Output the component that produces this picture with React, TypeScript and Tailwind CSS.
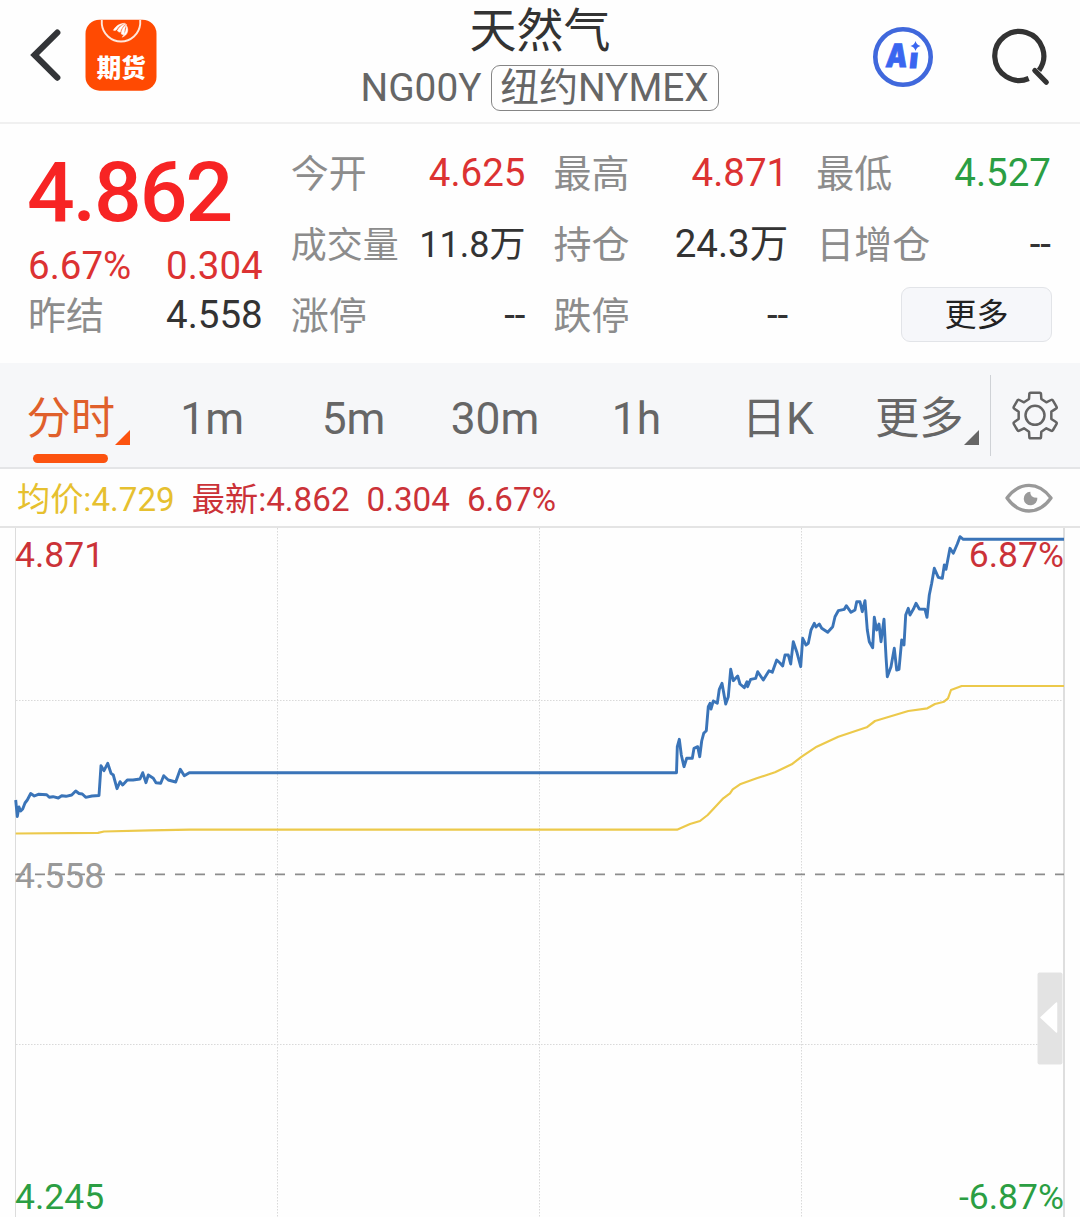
import React from "react";

const BLUE_LINE =
  "15.7,800 17.3,816.5 19,807 20.7,811 22.7,809 25,803 27.3,800 30.7,793.5 34.3,796 38.3,794.3 46.7,794.7 49.3,797.3 53,796.7 58.3,798 61.7,795.7 66,796.3 71.7,795 75.7,791 79,793.5 82.3,794 85.7,797.3 92,796 99,795.5 101,765.7 104,770.7 107.7,763.3 111,773.3 113.3,775 117,788.7 120,781.7 122.7,785 127.3,780 133,780 140,779 142.7,772.7 146,782.7 148.3,775 153.3,778.3 156,782.7 160.7,783.3 163.7,775.7 168.3,780 175.7,782 180.3,769.3 184.3,775.7 189.3,772.7 676.5,772.7 677.3,746.7 679.3,739.3 681.3,755 684,766.7 686.7,758.3 692.3,758.3 694,748.3 697.7,746.7 699.7,756.7 701.7,741 703.7,733.3 706.3,730.7 708.3,706.7 710,703.3 711,709 713.3,701 717.3,703.3 719.3,689.3 722,683.3 725.7,704 728.3,696.7 730.7,669.3 733.3,680.7 737.7,676 740,684 744.3,687.7 747,681.7 747.6,686.7 750.7,679.3 755.7,678.3 757.7,671.7 763.3,680 769,670.7 772.3,672.3 776.7,660 780,663 782.7,666 785,655 788.3,655 790.7,664 793.3,641.7 796.7,651.7 800.7,666.7 802.7,638.3 806,645 808.3,643.3 811,630 814.3,623.3 816,627 819.3,624 821.7,628.3 827.7,632.3 832.7,626.7 835,616.7 838.3,610.7 844.3,609.3 846.3,605.7 851,612.3 855,610 856.7,601.7 860,601.7 862.3,611.7 865,600.7 867.3,630 869.3,641.7 872.7,647.7 874.3,617.3 876.7,630 879,624 881,641.7 884,619.3 886,656.7 887.3,676.7 891,666.7 894.3,648.3 896.7,670 899,669.3 901.7,640 904,645 905.7,615 908.3,608.3 910,615 913.3,609.3 916,603.3 919.3,609 925,609.3 927,617.3 929.3,595 931.7,583.3 934.3,568.3 938.3,577.3 942.3,578.3 944.3,565 946,569.3 950,548.3 953.3,553.3 957.3,544 960,536.7 963.3,539.3 1064,539.3";

const AVG_LINE =
  "15.7,833.5 98,832.8 104,831.5 150,830.3 190,829.7 677,829.7 690,824 700,821 707.7,815 723.3,798.3 730,793.3 732.7,789.3 740,784.3 756.7,778.3 775,772.3 791.7,764.3 801.7,756.7 816.7,746.7 838.3,736.7 866.7,727.3 875,721 880,719.5 908.3,711 927.3,708.3 935,704 944,701.7 948,698.3 951,690 961.7,686 1064,686";

function BackIcon() {
  return (
    <svg className="ml-[28px] h-[56px] w-[36px]" viewBox="28 27 36 56" fill="none">
      <path d="M57.3 32.6 34.6 55 57.3 77.6" stroke="#333538" strokeWidth="6.2" strokeLinecap="round" />
    </svg>
  );
}

function AppLogo() {
  return (
    <svg className="ml-[21px] h-[72px] w-[72px]" viewBox="85 19 72 72">
      <rect x="85.5" y="19.7" width="71" height="71" rx="14" fill="#ff4a02" />
      <path d="M101.8 20v4.200a19.3 19.3 0 0 0 38.4 0V20" fill="none" stroke="#ffe6da" strokeWidth="1.9" />
      <g fill="#fff" stroke="#fff" strokeWidth=".5">
        <path d="M113.4 30.2c2.6-4.500 6.600-6.800 11.400-6.900-3.600 1.300-6.800 3.300-8.600 6.800-.9.500-1.900.5-2.800.1Z" />
        <path d="M117.300 30.800c1.800-3.700 5-6.300 8.700-7-2.600 1.800-4.800 4.500-5.800 8.400-1.100 0-2.100-.5-2.900-1.400Z" />
        <path d="M121.200 33.800c.2-4 2.300-7.600 5.400-9.400-1.600 2.600-2.500 5.900-2.200 10.200-1.200.4-2.400.1-3.200-.8Z" />
        <path d="M122.200 37.200c3-2.700 4.100-7.600 4.300-11.600 2.400 4.200 1.600 9.300-4.300 11.600Z" />
      </g>
      <text x="121.3" y="76.6" textAnchor="middle" fill="#fff" fontSize="24.500" fontWeight="900" fontFamily="'Noto Sans CJK SC', sans-serif">
        期货
      </text>
    </svg>
  );
}

function AiIcon() {
  return (
    <svg className="h-[62px] w-[62px]" viewBox="872 25.500 62 62">
      <circle cx="903" cy="56.500" r="27.700" fill="#fff" stroke="#4068dc" strokeWidth="4.600" />
      <g fill="#3a66f0" fontFamily="Inter, sans-serif" fontWeight="900" stroke="#3a66f0">
        <text transform="translate(885 66.400) skewX(-6)" fontSize="32" textLength="21.500" lengthAdjust="spacingAndGlyphs" strokeWidth=".8">
          A
        </text>
        <text transform="translate(908.800 67.800) skewX(-6)" fontSize="28" strokeWidth="1.200">
          i
        </text>
      </g>
      <path d="M908.500 41h13.500v11h-13.500z" fill="#fff" />
      <path d="M915.500 40.500q1 4 5 5-4 1-5 5-1-4-5-5 4-1 5-5Z" fill="#3a66f0" />
    </svg>
  );
}

function SearchIcon() {
  return (
    <svg className="ml-[56px] h-[62px] w-[62px]" viewBox="990 25.500 62 62" fill="none" stroke="#333" strokeWidth="5.200">
      <path d="M1028.700 78A24.500 24.500 0 1 1 1039 69.900" />
      <path d="M1034.800 70 1046.300 81.700" strokeLinecap="round" />
    </svg>
  );
}

function GearIcon() {
  return (
    <svg className="mr-[2px] h-[50px] w-[50px]" viewBox="868 90 150 150" fill="none" stroke="#646464" strokeWidth="7.500" strokeLinejoin="round">
      <path d="M930 98h27q4 0 4 4l1 15 15 10 14-7q4-2 6 2l10 17q3 5-1 7l-14 9v22l14 9q4 2 1 7l-10 17q-2 4-6 2l-14-7-15 10-1 16q0 4-4 4h-27q-4 0-4-4l-1-16-15-10-14 7q-4 2-6-2l-10-17q-3-5 1-7l13-9v-22l-13-9q-4-2-1-7l10-17q2-4 6-2l14 7 15-10 1-15q0-4 4-4Z" />
      <circle cx="943" cy="166" r="28.500" />
    </svg>
  );
}

function EyeIcon() {
  return (
    <svg className="h-[32px] w-[50px]" viewBox="853 368 150 96">
      <path d="M862 416q28-38 66-38t66 38q-28 39-66 39t-66-39Z" fill="none" stroke="#999" strokeWidth="10" strokeLinejoin="round" />
      <path d="M932 397q-2 18 21 18a20.500 20.500 0 1 1-21-18Z" fill="#999" />
    </svg>
  );
}

function Corner({ color }: { color: string }) {
  return (
    <svg className="absolute left-[115px] top-[67px] h-[15px] w-[15px]" viewBox="0 0 15 15">
      <path d="M0 15 15 0v15Z" fill={color} />
    </svg>
  );
}

type StatProps = { label: string; value?: string; tone?: string; size?: string };

function Stat({ label, value, tone = "text-[#333]", size = "text-[38.500px]" }: StatProps) {
  return (
    <div className="flex justify-between whitespace-nowrap">
      <span className="pt-px leading-[51px] text-[#8c8c8c]">{label}</span>
      <span className={`${size} ${tone}`}>{value}</span>
    </div>
  );
}

const RED = "text-[#dc3232]";
const GREEN = "text-[#2b9e43]";

const TABS = ["1m", "5m", "30m", "1h", "日K"];

export default function App() {
  return (
    <div className="flex h-[1217px] w-[1080px] flex-col overflow-hidden bg-[#fefefe] font-['Roboto','Noto_Sans_CJK_SC',sans-serif]">
      <header className="flex h-[124px] shrink-0 border-b-2 border-[#f0f0f0]">
        <div className="flex h-[110px] w-[340px] items-center">
          <BackIcon />
          <AppLogo />
        </div>
        <div className="flex w-[400px] flex-col items-center">
          <h1 className="h-[59px] text-[47px] leading-[61px] text-[#333]">天然气</h1>
          <div className="mt-[5px] flex items-center whitespace-nowrap text-[38.800px] leading-[46px] text-[#666]">
            <span className="-ml-px pt-px">NG00Y</span>
            <span className="ml-[9px] flex h-[46px] w-[228px] items-center justify-center rounded-[9px] border border-[#858585] pt-px leading-[44px]">
              纽约NYMEX
            </span>
          </div>
        </div>
        <div className="flex h-[113px] w-[340px] items-center pl-[132px]">
          <AiIcon />
          <SearchIcon />
        </div>
      </header>

      <section className="grid h-[239px] shrink-0 grid-cols-4 gap-x-7 pl-7 pr-[29px] text-[38px] leading-[50px]">
        <div className="flex flex-col">
          <div className="-ml-px mt-[22px] h-[95px] text-[84px] font-medium leading-[94px] tracking-[-2px] text-[#f72424]">4.862</div>
          <div className={`flex justify-between text-[38.500px] ${RED}`}>
            <span>6.67%</span>
            <span>0.304</span>
          </div>
          <div className="-mt-px">
            <Stat label="昨结" value="4.558" />
          </div>
        </div>
        <div className="flex flex-col gap-[19px] pt-[24px]">
          <Stat label="今开" value="4.625" tone={RED} />
          <div className="h-[52px] pt-px text-[36px]">
            <Stat label="成交量" value="11.8万" size="text-[36px]" />
          </div>
          <Stat label="涨停" value="--" />
        </div>
        <div className="flex flex-col gap-[19px] pt-[24px]">
          <Stat label="最高" value="4.871" tone={RED} />
          <Stat label="持仓" value="24.3万" />
          <Stat label="跌停" value="--" />
        </div>
        <div className="flex flex-col gap-[19px] pt-[24px]">
          <Stat label="最低" value="4.527" tone={GREEN} />
          <Stat label="日增仓" value="--" />
          <button className="-mr-px -mt-[3px] h-[55px] w-[151px] self-end rounded-[9px] border-[1.500px] border-[#e2e4e8] bg-[#f6f7fa] pt-[2px] text-[32px] leading-[51px] text-[#222]">
            更多
          </button>
        </div>
      </section>

      <nav className="flex h-[106px] shrink-0 border-b-2 border-[#e4e5e7] bg-[#f6f7f9] text-[44.300px] leading-[113px] text-[#666]">
        <div className="flex w-[990px]">
          <div className="relative flex-1 text-center text-[#e0602c]">
            分时
            <Corner color="#fc5310" />
            <div className="absolute left-[33px] top-[91px] h-[9px] w-[75px] rounded-full bg-[#fc5310]" />
          </div>
          {TABS.map((t) => (
            <div key={t} className="flex-1 text-center">{t}</div>
          ))}
          <div className="relative flex-1 text-center">
            更多
            <Corner color="#666" />
          </div>
        </div>
        <div className="mt-3 h-[81px] w-px bg-[#cfd2d6]" />
        <div className="flex h-[104px] flex-1 items-center justify-center">
          <GearIcon />
        </div>
      </nav>

      <div className="flex h-[59px] shrink-0 items-center border-b-2 border-[#e4e4e4] pl-[17px] pr-[26px] text-[33.200px] leading-[57px] text-[#cb3238]">
        <div className="flex gap-[17px] pt-[4px]">
          <span className="text-[#e6c02f]">均价:4.729</span>
          <span>最新:4.862</span>
          <span>0.304</span>
          <span>6.67%</span>
        </div>
        <div className="ml-auto pt-px">
          <EyeIcon />
        </div>
      </div>

      <main className="h-[689px] shrink-0">
        <svg className="h-[689px] w-[1080px]" viewBox="0 528 1080 689" fill="none" fontFamily="Roboto, sans-serif" fontSize="35.500">
          <g stroke="#d9d9d9" strokeDasharray="1.500 1.500">
            <path d="M277.500 528V1217M539.500 528V1217M801.500 528V1217M16 700.500H1064M16 1044.500H1064" />
          </g>
          <path d="M15.500 528V1217" stroke="#dcdcdc" />
          <path d="M1064 528V1217" stroke="#dedede" strokeWidth="2" />
          <path d="M15 874.300H1064" stroke="#8c8c8c" strokeWidth="1.800" strokeDasharray="10 10" />
          <polyline points={AVG_LINE} stroke="#ecc94b" strokeWidth="2.200" strokeLinejoin="round" />
          <polyline points={BLUE_LINE} stroke="#3a74b8" strokeWidth="2.900" strokeLinejoin="round" />
          <g fill="#cb3238">
            <text x="15" y="567.200">4.871</text>
            <text x="1064" y="567.200" textAnchor="end">6.87%</text>
          </g>
          <text x="15" y="888.200" fill="#999">4.558</text>
          <g fill="#2b9e43">
            <text x="15" y="1209">4.245</text>
            <text x="1064" y="1209" textAnchor="end">-6.87%</text>
          </g>
          <rect x="1037.500" y="972.500" width="25" height="92" rx="2" fill="#e3e3e3" />
          <path d="M1041 1017.500 1056.500 1003V1032Z" fill="#fff" stroke="#fff" strokeWidth="1.500" strokeLinejoin="round" />
        </svg>
      </main>
    </div>
  );
}
